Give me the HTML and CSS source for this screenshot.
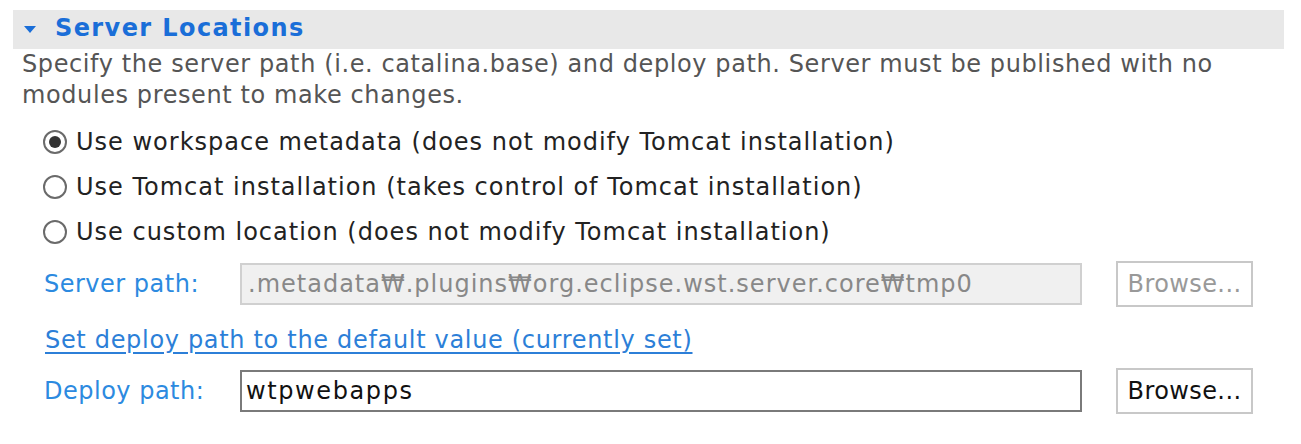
FILE: index.html
```html
<!DOCTYPE html>
<html>
<head>
<meta charset="utf-8">
<link rel="stylesheet" href="styles.css">
</head>
<body>
<div class="section">
  <div class="header">
    <svg class="twisty" width="12" height="7" viewBox="0 0 12 7"><path d="M0 0 H12 L6 7 Z" fill="#1a6ed8"/></svg>
    <span class="title">Server Locations</span>
  </div>
  <div class="body">
    <p class="desc">Specify the server path (i.e. catalina.base) and deploy path. Server must be published with no modules present to make changes.</p>
    <div class="radios">
      <label class="radio"><span class="circle checked"></span>Use workspace metadata (does not modify Tomcat installation)</label>
      <label class="radio"><span class="circle"></span>Use Tomcat installation (takes control of Tomcat installation)</label>
      <label class="radio"><span class="circle"></span>Use custom location (does not modify Tomcat installation)</label>
    </div>
    <div class="row row-server">
      <span class="label">Server path:</span>
      <div class="field disabled">.metadata₩.plugins₩org.eclipse.wst.server.core₩tmp0</div>
      <div class="btn disabled">Browse...</div>
    </div>
    <div class="linkrow"><a class="link">Set deploy path to the default value (currently set)</a></div>
    <div class="row row-deploy">
      <span class="label">Deploy path:</span>
      <div class="field editable">wtpwebapps</div>
      <div class="btn">Browse...</div>
    </div>
  </div>
</div>
</body>
</html>
```
FILE: styles.css
```css
* { box-sizing: border-box; }
html, body { margin: 0; padding: 0; background: #fff; }
body {
  font-family: "DejaVu Sans", "Noto Sans", sans-serif;
  width: 1301px;
  height: 444px;
  overflow: hidden;
}
.section { padding: 10px 17px 0 13px; }
.header {
  height: 39px;
  background: #e8e8e8;
  display: flex;
  align-items: center;
  padding-left: 11px;
  padding-bottom: 4px;
}
.twisty { margin-right: 19px; margin-top: 4px; }
.title {
  font-weight: bold;
  font-size: 24px;
  letter-spacing: 1.4px;
  color: #1a6ed8;
}
.body { padding-left: 9px; }
.desc {
  margin: 0;
  font-size: 24px;
  letter-spacing: 0.6px;
  line-height: 31px;
  color: #555;
  width: 1215px;
}
.radios { display: flex; flex-direction: column; padding-left: 21px; margin-top: 8px; }
.radio {
  display: flex;
  align-items: center;
  height: 45px;
  font-size: 24px;
  letter-spacing: 1px;
  color: #222;
}
.circle {
  width: 24px; height: 24px;
  border: 2px solid #6a6a6a;
  border-radius: 50%;
  margin-right: 9px;
  position: relative;
  flex: none;
}
.circle.checked::after {
  content: "";
  position: absolute;
  left: 4px; top: 4px;
  width: 12px; height: 12px;
  border-radius: 50%;
  background: #333;
}
.row { display: flex; align-items: center; padding-left: 22px; }
.row-server { margin-top: 7px; height: 46px; }
.row-deploy { height: 46px; }
.label { width: 196px; font-size: 24px; letter-spacing: 0.5px; color: #2c8ae0; flex: none; }
.field {
  width: 842px;
  height: 42px;
  border: 2px solid #7a7a7a;
  font-size: 24px;
  letter-spacing: 1px;
  color: #111;
  display: flex;
  align-items: center;
  padding-left: 6px;
  flex: none;
}
.field.disabled { background: #f0f0f0; border-color: #d0d0d0; color: #888; }
.field.editable { letter-spacing: 1.6px; padding-left: 4px; }
.btn {
  margin-left: 34px;
  width: 137px;
  height: 46px;
  border: 2px solid #c8c8c8;
  font-size: 24px;
  letter-spacing: 0.4px;
  color: #111;
  display: flex;
  align-items: center;
  justify-content: center;
  flex: none;
}
.btn.disabled { color: #999; }
.linkrow { padding-left: 23px; padding-top: 4px; height: 61px; display: flex; align-items: center; }
.link {
  font-size: 24px;
  letter-spacing: 0.68px;
  color: #2c7fd8;
  text-decoration: underline;
  text-underline-offset: 4px;
}
```
